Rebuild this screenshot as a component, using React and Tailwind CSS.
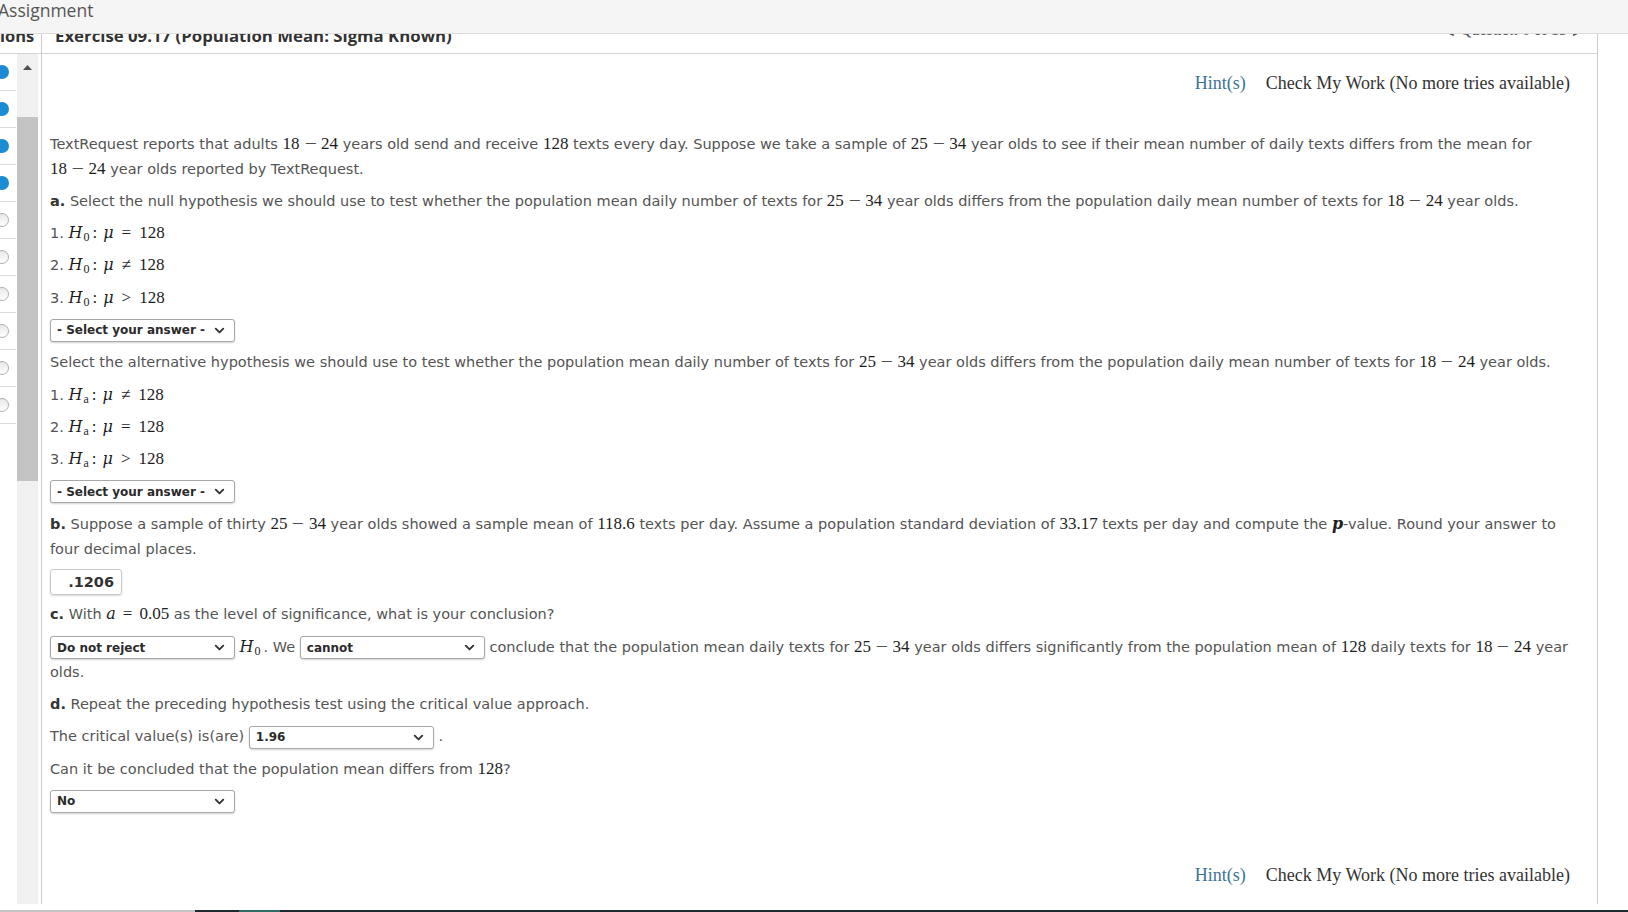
import { ChevronDown } from 'lucide-react';

const radios = [true, true, true, true, false, false, false, false, false, false];

function Range({ a, b }) {
    return (
        <span className="whitespace-nowrap font-['Liberation_Serif',serif] text-[17px] leading-none text-[#1e1e1e]">
            {a}<span className="mx-[6px] inline-block scale-x-[1.3]">−</span>{b}
        </span>
    );
}

function Num({ children }) {
    return <span className="font-['Liberation_Serif',serif] text-[17px] leading-none text-[#1e1e1e]">{children}</span>;
}

function Var({ children }) {
    return <span className="font-['DejaVu_Serif',serif] text-[16px] italic leading-none">{children}</span>;
}

function H({ sub }) {
    return (
        <span className="whitespace-nowrap font-['Liberation_Serif',serif] text-[17px] leading-none text-[#1e1e1e]">
            <Var>H</Var><sub className="ml-[1px] mr-[3px] text-[12px]">{sub}</sub>
        </span>
    );
}

function Hyp({ n, sub, op }) {
    return (
        <div>
            {n}.{' '}
            <span className="whitespace-nowrap font-['Liberation_Serif',serif] text-[17px] leading-none text-[#1e1e1e]">
                <Var>H</Var><sub className="ml-[1px] text-[12px]">{sub}</sub>
                <span className="ml-[3px] mr-[6px]">:</span>
                <Var>μ</Var><span className="mx-[8px]">{op}</span>128
            </span>
        </div>
    );
}

function Select({ value, width = 'w-[185px]' }) {
    return (
        <span className={`${width} inline-flex h-[23px] items-center justify-between rounded-[3px] border border-[#a8a8a8] bg-white pl-[6px] pr-[7px] align-middle text-[12px] font-bold leading-none text-[#2b2b2b] shadow-[0_1px_2px_rgba(0,0,0,0.18)]`}>
            <span>{value}</span>
            <ChevronDown size={15} strokeWidth={3} className="text-[#333]" />
        </span>
    );
}

function Label({ children }) {
    return <span className="font-bold text-[#333]">{children}</span>;
}

function HintRow() {
    return (
        <div className="flex justify-end gap-[20px] pr-[27px] font-['Liberation_Serif',serif] text-[18px] leading-[25px]">
            <span className="text-[#3a7396]">Hint(s)</span>
            <span className="text-[#333]">Check My Work (No more tries available)</span>
        </div>
    );
}

export default function App() {
    return (
        <div className="flex h-[912px] w-[1628px] flex-col overflow-hidden bg-white font-['DejaVu_Sans',sans-serif] text-[#545454]">
            <div className="h-[34px] shrink-0 overflow-hidden border-b border-[#dcdcdc] bg-[#f5f5f5]">
                <span className="-ml-[2px] block pt-[1.5px] font-['Open_Sans',sans-serif] text-[17.5px] leading-[17.5px] text-[#555]">
                    Assignment
                </span>
            </div>

            <div className="flex h-[870px] shrink-0">
                <aside className="flex w-[41px] flex-col">
                    <div className="h-[20px] overflow-hidden border-b border-[#d4d4d4]">
                        <span className="-mt-[8.4px] block font-['Open_Sans',sans-serif] text-[16.5px] font-bold leading-[20px] text-[#333]">
                            ions
                        </span>
                    </div>
                    <div className="flex flex-1 gap-[1px]">
                        <ul className="w-[16px] overflow-hidden">
                            {radios.map((done, i) => (
                                <li key={i} className="flex h-[37px] items-center border-b border-[#dcdcdc]">
                                    {done ? (
                                        <span className="-ml-[5px] h-[14px] w-[14px] shrink-0 rounded-full bg-[#1b8bd4]" />
                                    ) : (
                                        <span className="-ml-[5px] h-[14px] w-[14px] shrink-0 rounded-full border border-[#b0b0b0] bg-gradient-to-b from-[#e8e8e8] to-white" />
                                    )}
                                </li>
                            ))}
                        </ul>
                        <div className="flex w-[21px] flex-col items-center bg-[#f0f0f0]">
                            <svg width="9" height="5" viewBox="0 0 9 5" className="mt-[11px]">
                                <path d="M0 5 L4.5 0 L9 5 Z" fill="#505050" />
                            </svg>
                            <div className="mt-[47px] h-[364px] w-full bg-[#c3c3c3]" />
                        </div>
                    </div>
                </aside>

                <main className="flex w-[1557px] flex-col border-l border-r border-[#cccccc]">
                    <div className="flex h-[20px] shrink-0 items-start justify-between overflow-hidden border-b border-[#d4d4d4]">
                        <h1 className="-mt-[8.4px] ml-[13px] font-['Open_Sans',sans-serif] text-[16.8px] font-bold leading-[20px] text-[#333]">
                            Exercise 09.17 (Population Mean: Sigma Known)
                        </h1>
                        <span className="-mt-[13.9px] mr-[16px] block whitespace-nowrap font-['Liberation_Serif',serif] text-[16px] leading-[20px] text-[#555]">
                            <span className="mr-[6px] text-[10px]">◀</span>
                            Question 6 of 15
                            <span className="ml-[6px] text-[10px]">▶</span>
                        </span>
                    </div>

                    <div className="flex flex-1 flex-col pb-[16.5px] pt-[16.5px]">
                        <HintRow />

                        <div className="mt-[36px] flex flex-col gap-[7.3px] pl-[8px] pr-[9px] text-[14.5px] leading-[25px]">
                            <p>
                                TextRequest reports that adults <Range a="18" b="24" /> years old send and receive <Num>128</Num> texts every day. Suppose we take a sample of <Range a="25" b="34" /> year olds to see if their mean number of daily texts differs from the mean for <Range a="18" b="24" /> year olds reported by TextRequest.
                            </p>
                            <p>
                                <Label>a.</Label> Select the null hypothesis we should use to test whether the population mean daily number of texts for <Range a="25" b="34" /> year olds differs from the population daily mean number of texts for <Range a="18" b="24" /> year olds.
                            </p>
                            <Hyp n="1" sub="0" op="=" />
                            <Hyp n="2" sub="0" op="≠" />
                            <Hyp n="3" sub="0" op=">" />
                            <div className="flex h-[25px] items-center">
                                <Select value="- Select your answer -" />
                            </div>
                            <p>
                                Select the alternative hypothesis we should use to test whether the population mean daily number of texts for <Range a="25" b="34" /> year olds differs from the population daily mean number of texts for <Range a="18" b="24" /> year olds.
                            </p>
                            <Hyp n="1" sub="a" op="≠" />
                            <Hyp n="2" sub="a" op="=" />
                            <Hyp n="3" sub="a" op=">" />
                            <div className="flex h-[25px] items-center">
                                <Select value="- Select your answer -" />
                            </div>
                            <p>
                                <Label>b.</Label> Suppose a sample of thirty <Range a="25" b="34" /> year olds showed a sample mean of <Num>118.6</Num> texts per day. Assume a population standard deviation of <Num>33.17</Num> texts per day and compute the <span className="font-['DejaVu_Serif',serif] text-[16px] font-bold italic leading-none text-[#1e1e1e]">p</span>-value. Round your answer to four decimal places.
                            </p>
                            <div>
                                <div className="flex h-[26px] w-[72px] items-center justify-end rounded-[3px] border border-[#c8c8c8] pr-[7px] text-[14.5px] font-bold text-[#333] shadow-[0_1px_2px_rgba(0,0,0,0.15)]">
                                    .1206
                                </div>
                            </div>
                            <p>
                                <Label>c.</Label> With{' '}
                                <span className="whitespace-nowrap font-['Liberation_Serif',serif] text-[17px] leading-none text-[#1e1e1e]">
                                    <Var>a</Var><span className="mx-[7px]">=</span>0.05
                                </span>{' '}
                                as the level of significance, what is your conclusion?
                            </p>
                            <p>
                                <Select value="Do not reject" /> <H sub="0" />. We <Select value="cannot" /> conclude that the population mean daily texts for <Range a="25" b="34" /> year olds differs significantly from the population mean of <Num>128</Num> daily texts for <Range a="18" b="24" /> year olds.
                            </p>
                            <p>
                                <Label>d.</Label> Repeat the preceding hypothesis test using the critical value approach.
                            </p>
                            <p>
                                The critical value(s) is(are) <Select value="1.96" /> .
                            </p>
                            <p>
                                Can it be concluded that the population mean differs from <Num>128</Num>?
                            </p>
                            <div className="flex h-[25px] items-center">
                                <Select value="No" />
                            </div>
                        </div>

                        <div className="mt-auto">
                            <HintRow />
                        </div>
                    </div>
                </main>
            </div>

            <div className="mt-auto flex h-[2px] shrink-0">
                <div className="w-[195px] bg-[#c4c4c4]" />
                <div className="w-[44px] bg-[#1d2b30]" />
                <div className="w-[41px] bg-[#2f6d6a]" />
                <div className="flex-1 bg-[#1d2b30]" />
            </div>
        </div>
    );
}
